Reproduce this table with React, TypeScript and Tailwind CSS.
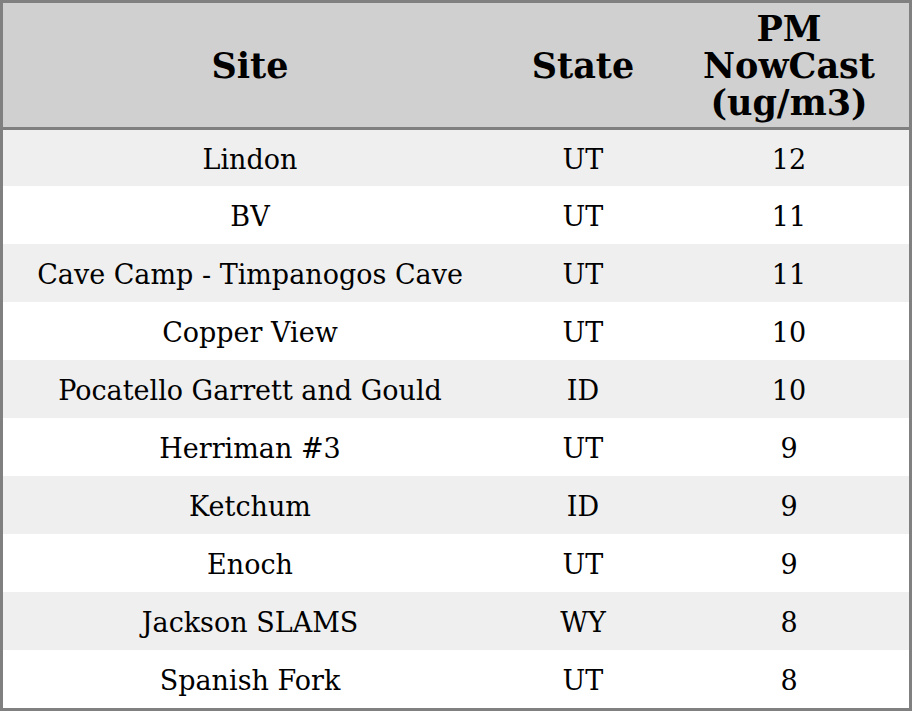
const rows = [
  ["Lindon", "UT", "12"],
  ["BV", "UT", "11"],
  ["Cave Camp - Timpanogos Cave", "UT", "11"],
  ["Copper View", "UT", "10"],
  ["Pocatello Garrett and Gould", "ID", "10"],
  ["Herriman #3", "UT", "9"],
  ["Ketchum", "ID", "9"],
  ["Enoch", "UT", "9"],
  ["Jackson SLAMS", "WY", "8"],
  ["Spanish Fork", "UT", "8"],
];

export default function App() {
  return (
    <div className="w-[912px] h-[711px] border-[3px] border-[#808080] bg-white font-['DejaVu_Serif',serif] text-black overflow-hidden">
      <table className="w-full border-collapse table-fixed">
        <colgroup>
          <col className="w-[494px]" />
          <col className="w-[172px]" />
          <col className="w-[240px]" />
        </colgroup>
        <thead>
          <tr className="bg-[#d0d0d0] border-b-[3px] border-[#808080] h-[125px]">
            <th className="text-[35px] leading-[37px] font-bold pt-[2px]">Site</th>
            <th className="text-[35px] leading-[37px] font-bold pt-[2px]">State</th>
            <th className="text-[35px] leading-[37px] font-bold pt-[2px]">
              PM
              <br />
              NowCast
              <br />
              (ug/m3)
            </th>
          </tr>
        </thead>
        <tbody>
          {rows.map((r, i) => (
            <tr key={i} className={i % 2 === 0 ? "bg-[#efefef] h-[58px]" : "bg-white h-[58px]"}>
              <td className="text-center text-[27px] pt-[4px]">{r[0]}</td>
              <td className="text-center text-[27px] pt-[4px]">{r[1]}</td>
              <td className="text-center text-[27px] pt-[4px]">{r[2]}</td>
            </tr>
          ))}
        </tbody>
      </table>
    </div>
  );
}
